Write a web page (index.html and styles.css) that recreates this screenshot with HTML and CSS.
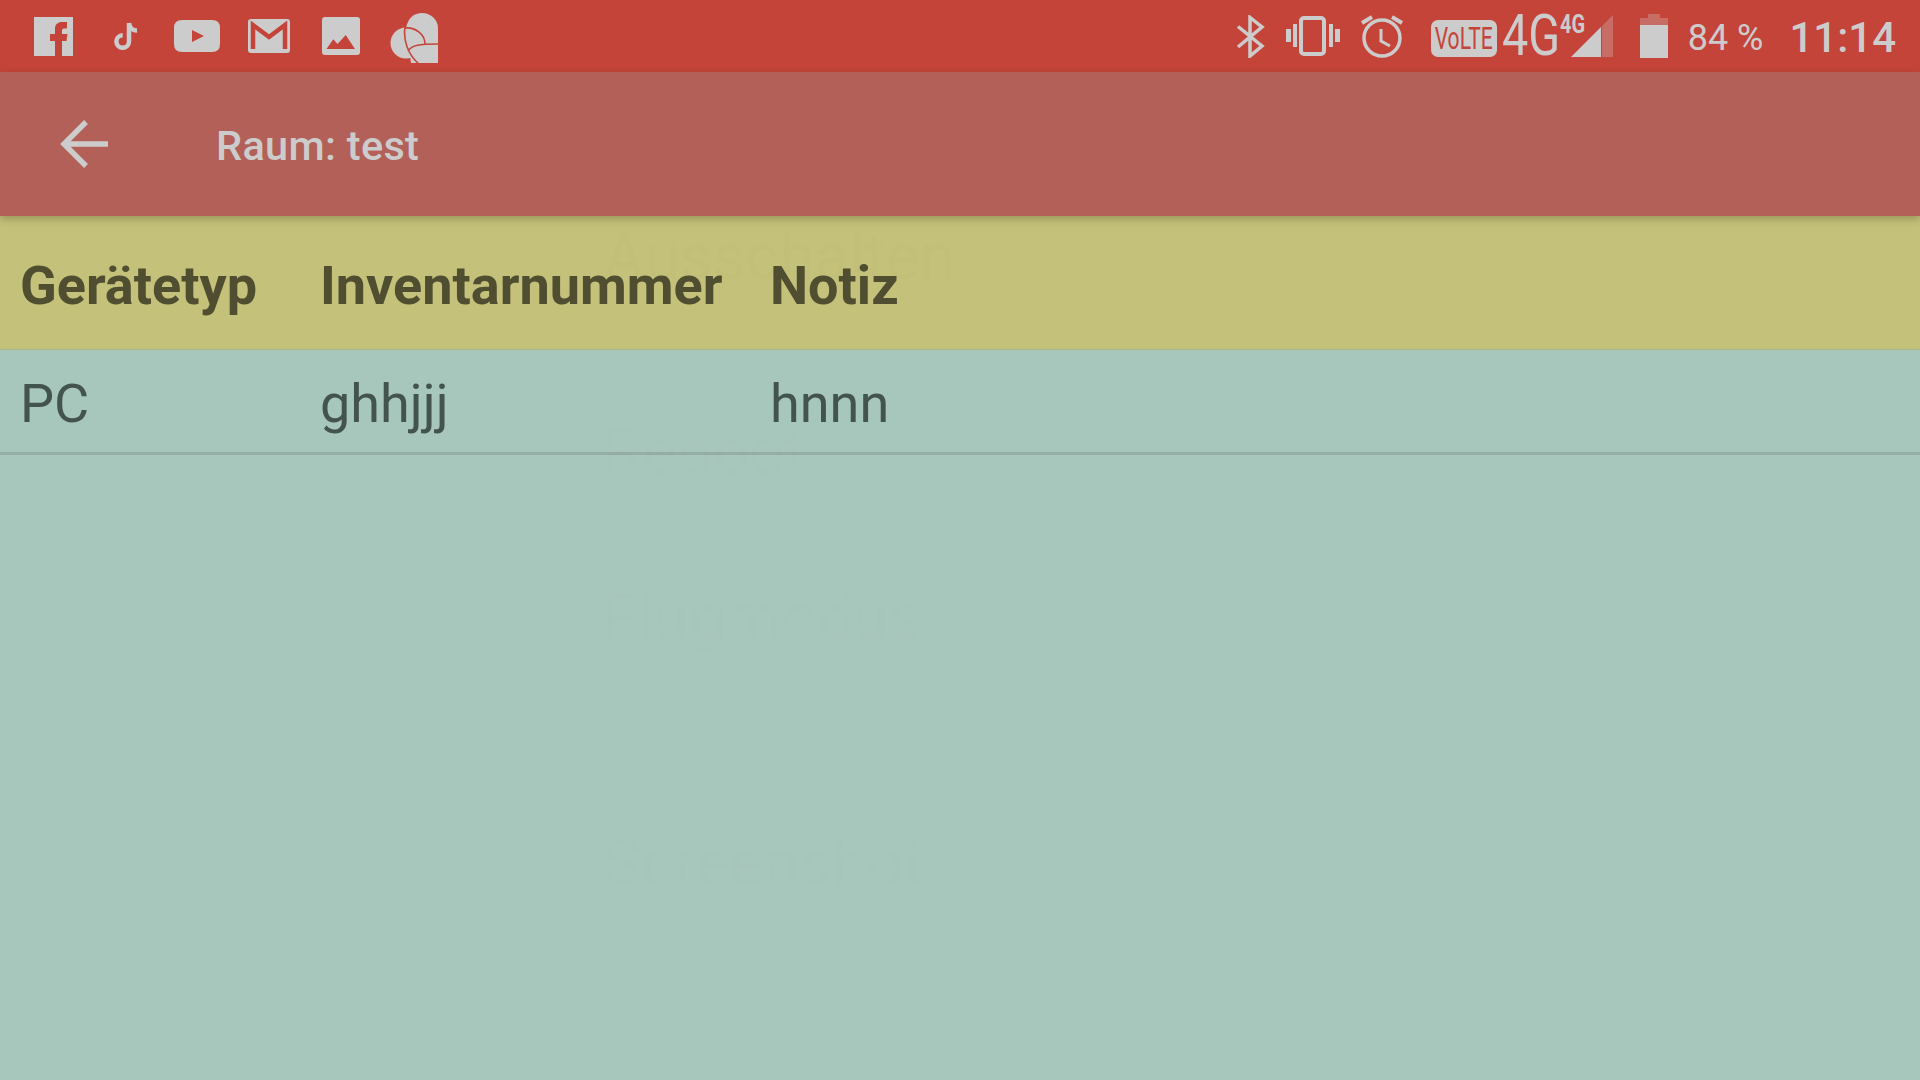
FILE: index.html
```html
<!DOCTYPE html>
<html lang="de">
<head>
    <meta charset="UTF-8">
    <meta name="viewport" content="width=device-width, initial-scale=1.0">
    <title>Raum: test</title>
    <link rel="stylesheet" href="styles.css">
</head>
<body>
    <div class="screen">
        <div class="status-bar">
            <div class="app-icons">
                <div class="slot">
                    <svg width="39" height="39" viewBox="0 0 39 39"><path class="fill" fill-rule="evenodd" d="M0 0H39V39H0Z M21 39V24H16V17H21V12C21 7 24 5 28 5H33V11.5H30C28.5 11.5 28 12.5 28 14V17H33.5L32.5 24H28V39Z"/></svg>
                </div>
                <div class="slot">
                    <svg width="24" height="28" viewBox="114 22 24 28"><path class="line" stroke-width="4.5" d="M130 23V41.5a6.3 6.3 0 1 1-6.3-6.3M130 23C130.5 27 133 30.500 138 30.500"/></svg>
                </div>
                <div class="slot">
                    <svg width="46" height="32" viewBox="0 0 46 32"><path class="fill" fill-rule="evenodd" d="M8 0H38Q46 0 46 8V24Q46 32 38 32H8Q0 32 0 24V8Q0 0 8 0Z M18 10V22L30 16Z"/></svg>
                </div>
                <div class="slot">
                    <svg width="42" height="34" viewBox="0 0 42 34"><rect class="fill" width="42" height="34" rx="3"/><path class="cut" stroke-width="4.500" d="M5 30V6L21 18L37 6V30"/></svg>
                </div>
                <div class="slot">
                    <svg width="38" height="38" viewBox="0 0 38 38"><path class="fill" fill-rule="evenodd" d="M3 0H35Q38 0 38 3V35Q38 38 35 38H3Q0 38 0 35V3Q0 0 3 0Z M4.500 32L11.300 22.300L15.500 27L23.700 18L33 32Z"/></svg>
                </div>
                <div class="slot">
                    <svg class="i-leaf" width="64" height="56" viewBox="0 0 64 56"><path class="fill" d="M23 20C25 10 31 5 39 5C48 5 55 12 55 20V55H28Z"/><circle class="fill" cx="23" cy="35" r="15.500"/><path class="cut" stroke-width="1.600" d="M22 19C20 32 25 47 36 56M22 20C32 19 42 26 42 36M25 43C29 37 36 36 55 36"/></svg>
                </div>
            </div>
            <div class="sys-icons">
                <svg class="i-bt" width="29" height="43" viewBox="0 0 29 43"><path class="line" stroke-width="3.500" d="M2 11.500L26 31L14 41V2.500L26 12L2 32"/></svg>
                <svg class="i-vib" width="54" height="40" viewBox="0 0 54 40"><rect class="line" x="15" y="2" width="23" height="36" rx="3" stroke-width="4"/><path class="fill" d="M0 13H5V26H0Z M7 8H11V31H7Z M43 8H47V31H43Z M49 13H54V26H49Z"/></svg>
                <svg class="i-alarm" width="44" height="43" viewBox="0 0 44 43"><circle class="line" cx="22" cy="23" r="18" stroke-width="3.500"/><path class="line" stroke-width="4" d="M2 8L12 2M42 8L32 2"/><path class="line" stroke-width="3" d="M21 14V26L30 31"/></svg>
                <div class="volte"><span>VoLTE</span></div>
                <div class="net"><span>4G</span></div>
                <div class="signal">
                    <span class="net-small">4G</span>
                    <svg width="42" height="42" viewBox="0 0 42 42"><path class="fill" d="M0 42L30 12V42Z"/><path class="fill dim" d="M31 11L42 0V42H31Z"/></svg>
                </div>
                <svg class="i-batt" width="28" height="44" viewBox="0 0 28 44"><path class="fill dim" d="M8 0H20V4H28V11H0V4H8Z"/><path class="fill" d="M0 11H28V44H0Z"/></svg>
                <span class="percent">84 %</span>
                <span class="clock">11:14</span>
            </div>
        </div>

        <div class="toolbar">
            <svg class="back" width="48" height="48" viewBox="0 0 48 48"><path class="line" stroke-width="5.500" d="M48 24H4M26 2L4 24L26 46"/></svg>
            <span class="title">Raum: test</span>
        </div>

        <div class="table-head">
            <div>Gerätetyp</div>
            <div>Inventarnummer</div>
            <div>Notiz</div>
        </div>
        <div class="table-row">
            <div>PC</div>
            <div>ghhjjj</div>
            <div>hnnn</div>
        </div>

        <!-- power menu fading out over the page -->
        <div class="ghost-menu">
            <div class="ghost g1">Ausschalten</div>
            <div class="ghost g2">Reboot</div>
            <div class="ghost g3">Flugmodus</div>
            <div class="ghost g4">Screenshot</div>
        </div>
    </div>
</body>
</html>
```

FILE: styles.css
```css
* {
    margin: 0;
    padding: 0;
    box-sizing: border-box;
}

body {
    font-family: Roboto, 'Liberation Sans', sans-serif;
    background: #a8c7bc;
}

.screen {
    position: relative;
    width: 1920px;
    height: 1080px;
    overflow: hidden;
    background: #a8c7bc;
}

svg {
    display: block;
    flex-shrink: 0;
}

.fill { fill: #cccccc; }
.fill.dim { opacity: 0.3; }
.line { fill: none; stroke: #cccccc; }
.cut { fill: none; stroke: #c4443a; }

.status-bar {
    height: 72px;
    background: #c4443a;
    display: flex;
    justify-content: space-between;
    color: #cccccc;
}

.app-icons {
    display: flex;
    align-items: center;
    padding-left: 17px;
}

.slot {
    width: 72px;
    display: flex;
    justify-content: center;
}

.i-leaf { margin-left: 3px; }

.sys-icons {
    display: flex;
    align-items: center;
    padding-right: 24px;
}

.i-bt { margin-top: 1px; }
.i-vib { margin-left: 21px; }
.i-alarm { margin-left: 20px; }

.volte {
    width: 66px;
    height: 37px;
    margin-left: 27px;
    margin-top: 5px;
    background: #cccccc;
    border-radius: 7px;
    color: #c4443a;
    font-size: 31px;
    line-height: 37px;
    text-align: center;
}

.volte span {
    display: inline-block;
    transform: scaleX(0.68);
    transform-origin: center;
    margin: 0 -20px;
}

.net {
    width: 55px;
    margin-left: 5px;
    font-size: 57px;
    line-height: 72px;
}

.net span {
    display: inline-block;
    transform: scaleX(0.82);
    transform-origin: left center;
}

.signal {
    position: relative;
    margin-left: 14px;
}

.net-small {
    position: absolute;
    left: -11px;
    top: -3px;
    font-size: 25px;
    font-weight: 700;
    line-height: 25px;
    transform: scaleX(0.8);
    transform-origin: left center;
}

.i-batt { margin-left: 27px; }

.percent {
    margin-left: 20px;
    margin-top: 4px;
    font-size: 36px;
}

.clock {
    margin-left: 26px;
    margin-top: 2px;
    font-size: 42px;
    font-weight: 500;
}

.toolbar {
    height: 144px;
    background: #b26058;
    display: flex;
    align-items: center;
    padding-left: 60px;
    position: relative;
    z-index: 1;
    box-shadow: 0 3px 8px rgba(70, 70, 30, 0.35);
}

.title {
    margin-left: 108px;
    margin-top: 2px;
    font-size: 41.5px;
    font-weight: 500;
    letter-spacing: 0.3px;
    color: #cccccc;
}

.table-head,
.table-row {
    display: grid;
    grid-template-columns: 300px 450px 1fr;
    align-items: center;
    padding-left: 20px;
    font-size: 54px;
}

.table-head {
    height: 134px;
    padding-top: 5px;
    background: #c4c17a;
    border-bottom: 1px solid #a9b98c;
    font-weight: 700;
    color: #4f4e30;
}

.table-row {
    height: 105px;
    padding-top: 4px;
    border-bottom: 3px solid #96aea4;
    color: #43534e;
}

.ghost-menu {
    position: absolute;
    top: 0;
    left: 603px;
}

.ghost {
    font-size: 64px;
    line-height: 76px;
    color: rgba(70, 90, 70, 0.012);
}

.g1 { margin-top: 220px; }
.g2 { margin-top: 119px; }
.g3 { margin-top: 89px; }
.g4 { margin-top: 170px; }
```
